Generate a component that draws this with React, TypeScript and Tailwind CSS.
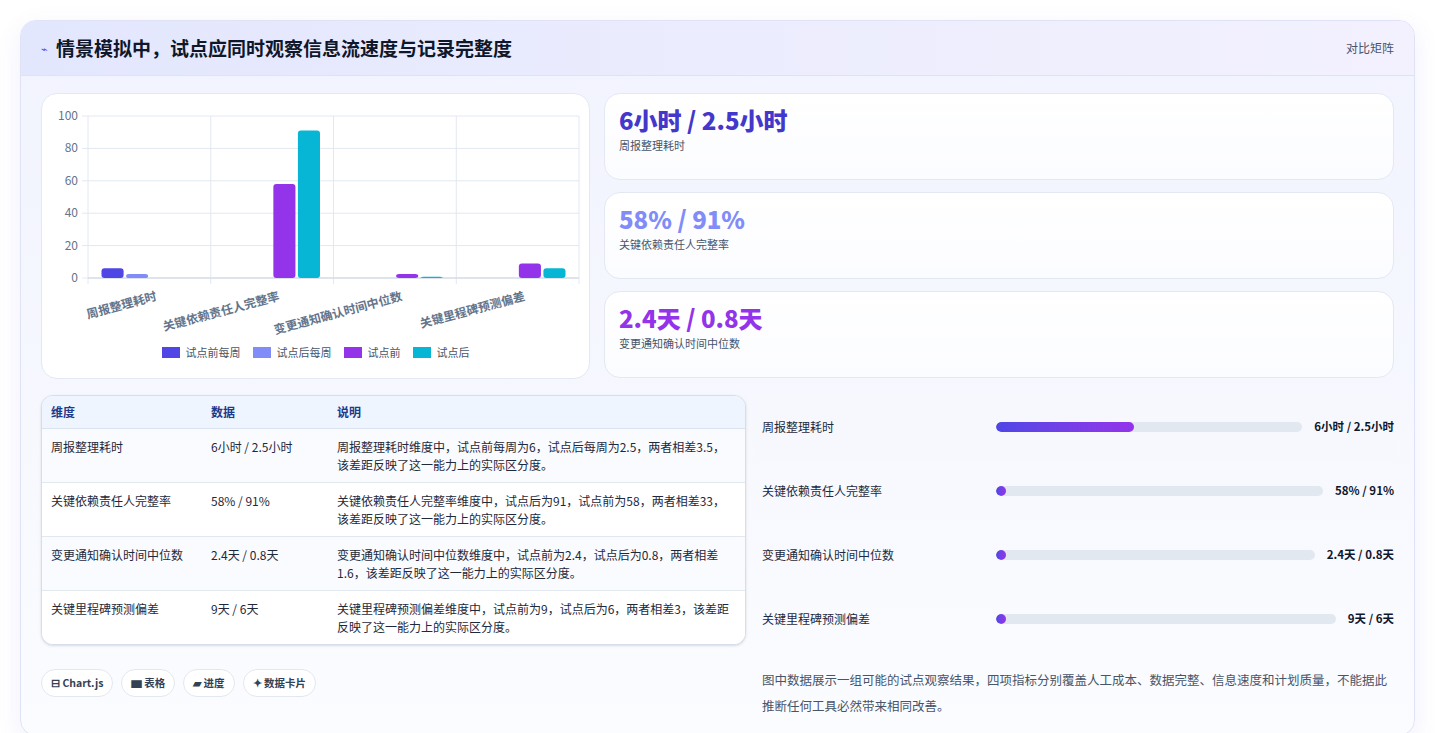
import React from 'react'

const FONT = { fontFamily: '"Noto Sans CJK SC", "Liberation Sans", sans-serif' }

const CATS = ['周报整理耗时', '关键依赖责任人完整率', '变更通知确认时间中位数', '关键里程碑预测偏差']
const COLORS = ['#4f46e5', '#818cf8', '#9333ea', '#06b6d4']
// [category][dataset]
const VALUES: (number | null)[][] = [
    [6, 2.5, null, null],
    [null, null, 58, 91],
    [null, null, 2.4, 0.8],
    [null, null, 9, 6],
]

const ROWS = [
    { name: '周报整理耗时', data: '6小时 / 2.5小时', desc: '周报整理耗时维度中，试点前每周为6，试点后每周为2.5，两者相差3.5，该差距反映了这一能力上的实际区分度。' },
    { name: '关键依赖责任人完整率', data: '58% / 91%', desc: '关键依赖责任人完整率维度中，试点后为91，试点前为58，两者相差33，该差距反映了这一能力上的实际区分度。' },
    { name: '变更通知确认时间中位数', data: '2.4天 / 0.8天', desc: '变更通知确认时间中位数维度中，试点前为2.4，试点后为0.8，两者相差1.6，该差距反映了这一能力上的实际区分度。' },
    { name: '关键里程碑预测偏差', data: '9天 / 6天', desc: '关键里程碑预测偏差维度中，试点前为9，试点后为6，两者相差3，该差距反映了这一能力上的实际区分度。' },
]

const PROGRESS = [
    { name: '周报整理耗时', value: '6小时 / 2.5小时', pct: 45, highlight: true },
    { name: '关键依赖责任人完整率', value: '58% / 91%', pct: 0 },
    { name: '变更通知确认时间中位数', value: '2.4天 / 0.8天', pct: 0 },
    { name: '关键里程碑预测偏差', value: '9天 / 6天', pct: 0 },
]

function BarChart() {
    const x0 = 46, x1 = 537, y0 = 22, y1 = 184
    const cw = (x1 - x0) / 4
    const yOf = (v: number) => y1 - (v / 100) * (y1 - y0)
    return (
        <svg width="549" height="286" viewBox="0 0 549 286" style={FONT}>
            {[0, 20, 40, 60, 80, 100].map((t) => (
                <g key={t}>
                    <line x1={x0 - 6} x2={x1} y1={yOf(t)} y2={yOf(t)} stroke="#e2e8f0" />
                    <text x={x0 - 10} y={yOf(t) + 4} textAnchor="end" fontSize="12" fill="#64748b">{t}</text>
                </g>
            ))}
            {[0, 1, 2, 3, 4].map((i) => (
                <line key={i} x1={x0 + i * cw} x2={x0 + i * cw} y1={y0} y2={y1 + 6} stroke="#e2e8f0" />
            ))}
            <line x1={x0} x2={x1} y1={y1} y2={y1} stroke="#cbd5e1" />
            {VALUES.map((vals, c) =>
                vals.map((v, d) => {
                    if (v == null) return null
                    const slot = (cw * 0.8) / 4
                    const bx = x0 + c * cw + cw * 0.1 + d * slot + slot * 0.05
                    const y = yOf(v)
                    return <rect key={`${c}-${d}`} x={bx} y={y} width={slot * 0.9} height={y1 - y} rx="3" fill={COLORS[d]} />
                }),
            )}
            {CATS.map((c, i) => {
                const cx = x0 + i * cw + cw / 2 + 8
                return (
                    <text key={c} x={cx} y={y1 + 22} textAnchor="end" fontSize="12" fontWeight="600" fill="#64748b" transform={`rotate(-15 ${cx} ${y1 + 22})`}>
                        {c}
                    </text>
                )
            })}
        </svg>
    )
}

export default function App() {
    return (
        <div className="min-h-screen bg-white p-5" style={FONT}>
            <div className="rounded-2xl border border-[#dfe3f5] bg-gradient-to-b from-[#f1f3fe] to-[#fbfcff] shadow-[0_8px_24px_rgba(99,102,241,0.10)] overflow-hidden">
                {/* header */}
                <div className="h-[55px] flex items-center justify-between px-5 bg-gradient-to-r from-[#e3e7fd] to-[#f3f1fe] border-b border-[#dde3f6]">
                    <div className="flex items-center gap-2">
                        <span className="text-[11px] text-[#4f46e5]">⌁</span>
                        <h1 className="text-[19px] font-bold text-[#0f172a]">情景模拟中，试点应同时观察信息流速度与记录完整度</h1>
                    </div>
                    <span className="text-[12px] text-[#475569]">对比矩阵</span>
                </div>

                <div className="px-5 pt-[17px] pb-4">
                    {/* top row */}
                    <div className="flex gap-[14px]">
                        <div className="w-[549px] h-[286px] shrink-0 rounded-2xl bg-white border border-[#e3e8f3] relative">
                            <BarChart />
                            <div className="absolute left-0 right-0 top-[250px] flex justify-center gap-3 text-[11px] text-[#475569]">
                                {['试点前每周', '试点后每周', '试点前', '试点后'].map((l, i) => (
                                    <div key={l} className="flex items-center gap-1.5">
                                        <span className="w-[18px] h-[11px]" style={{ background: COLORS[i] }} />
                                        {l}
                                    </div>
                                ))}
                            </div>
                        </div>
                        <div className="flex-1 flex flex-col gap-3">
                            {[
                                { v: '6小时 / 2.5小时', l: '周报整理耗时', c: 'text-[#4338ca]' },
                                { v: '58% / 91%', l: '关键依赖责任人完整率', c: 'text-[#818cf8]' },
                                { v: '2.4天 / 0.8天', l: '变更通知确认时间中位数', c: 'text-[#9333ea]' },
                            ].map((k) => (
                                <div key={k.l} className="h-[87px] rounded-2xl bg-gradient-to-b from-white to-[#fbfcff] border border-[#e3e8f3] px-[14px] pt-[10px]">
                                    <div className={`text-[24px] font-extrabold leading-[32px] ${k.c}`}>{k.v}</div>
                                    <div className="text-[11px] text-[#475569] mt-[1px]">{k.l}</div>
                                </div>
                            ))}
                        </div>
                    </div>

                    {/* bottom row */}
                    <div className="flex gap-3 mt-4">
                        <div className="w-[705px] shrink-0">
                            <div className="rounded-xl border border-[#d7deeb] overflow-hidden bg-white shadow-sm">
                                <div className="flex h-[33px] items-center bg-[#eef5ff] border-b border-[#dbe3ef] text-[12px] font-semibold text-[#1e3a8a]">
                                    <div className="w-[169px] pl-[9px]">维度</div>
                                    <div className="w-[126px]">数据</div>
                                    <div className="flex-1">说明</div>
                                </div>
                                {ROWS.map((r, i) => (
                                    <div key={r.name} className={`flex py-[8px] text-[12px] text-[#1e293b] leading-[18px] ${i < 3 ? 'border-b border-[#e2e8f0]' : ''} ${i % 2 ? 'bg-white' : 'bg-[#fafbfe]'}`}>
                                        <div className="w-[169px] pl-[9px] pt-[1px]">{r.name}</div>
                                        <div className="w-[126px] pt-[1px]">{r.data}</div>
                                        <div className="flex-1 pr-3 pt-[1px]">{r.desc}</div>
                                    </div>
                                ))}
                            </div>
                            <div className="flex gap-2 mt-6">
                                {['⊟ Chart.js', '▆ 表格', '▰ 进度', '✦ 数据卡片'].map((c) => (
                                    <span key={c} className="h-[28px] px-[9px] flex items-center rounded-full border border-[#e2e8f0] bg-white text-[10.5px] font-semibold text-[#334155]">{c}</span>
                                ))}
                            </div>
                        </div>
                        <div className="flex-1 flex flex-col">
                            {PROGRESS.map((p) => (
                                <div key={p.name} className={`h-[64px] flex items-center gap-3 ${p.highlight ? 'bg-[#f6f8fd]' : ''}`}>
                                    <div className="w-[226px] text-[12px] text-[#1e293b] pl-1">{p.name}</div>
                                    <div className="flex-1 h-[10px] rounded-full bg-[#e2e8f0] overflow-hidden">
                                        <div className="h-full rounded-full bg-gradient-to-r from-[#4f46e5] to-[#9333ea]" style={{ width: p.pct ? `${p.pct}%` : '10px' }} />
                                    </div>
                                    <div className="text-[11.5px] font-bold text-[#0f172a] whitespace-nowrap">{p.value}</div>
                                </div>
                            ))}
                            <p className="mt-4 text-[12.5px] leading-[26px] text-[#475569] pl-1">
                                图中数据展示一组可能的试点观察结果，四项指标分别覆盖人工成本、数据完整、信息速度和计划质量，不能据此推断任何工具必然带来相同改善。
                            </p>
                        </div>
                    </div>
                </div>
            </div>
        </div>
    )
}
